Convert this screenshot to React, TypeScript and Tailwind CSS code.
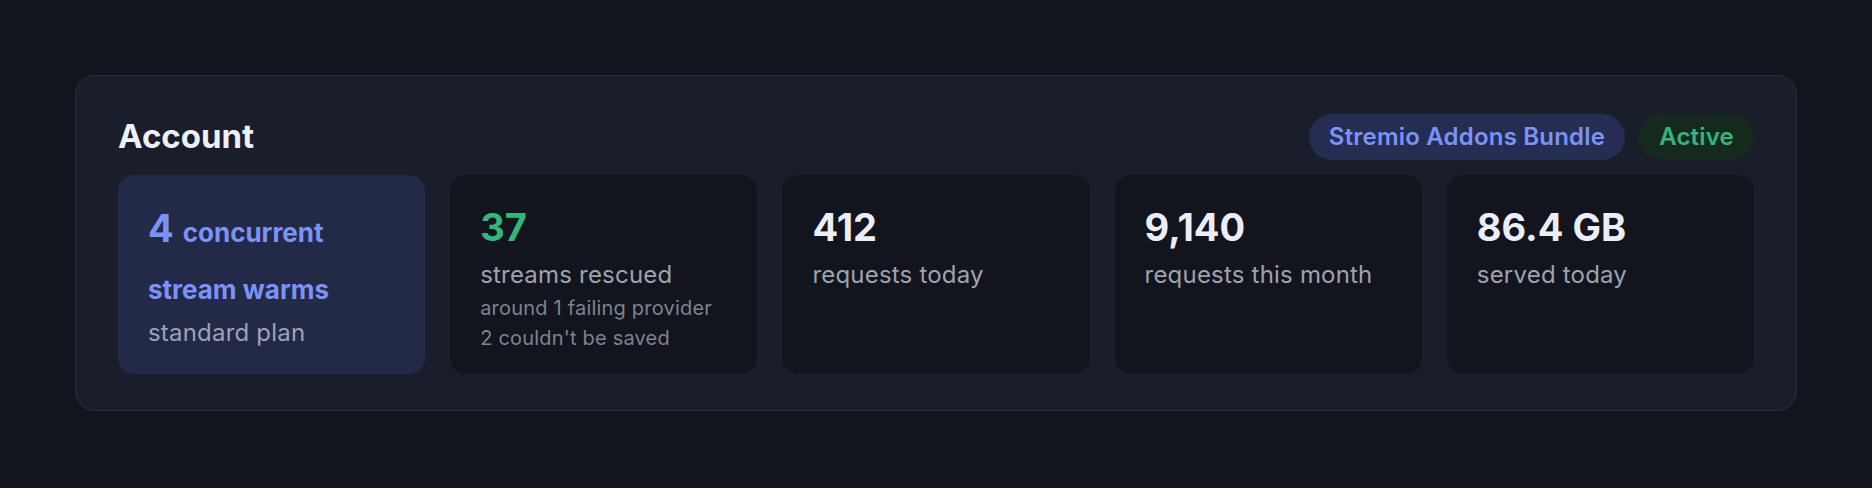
import React from "react";

const font = { fontFamily: "Inter, 'Noto Sans', sans-serif" };

function Stat({
  value,
  label,
  valueClass,
  subs,
}: {
  value: string;
  label: string;
  valueClass: string;
  subs?: string[];
}) {
  return (
    <div className="rounded-[16px] bg-[#12151e] px-[30px] pt-[29px] pb-[20px]">
      <div className={`text-[38px] leading-[46px] font-bold ${valueClass}`}>{value}</div>
      <div className="mt-[9px] text-[24px] leading-[32px] tracking-[0.2px] text-[#9ea2ae]">{label}</div>
      {subs && (
        <div className="mt-[2px]">
          {subs.map((s) => (
            <div key={s} className="text-[20px] leading-[30px] tracking-[0.2px] text-[#7e838f]">
              {s}
            </div>
          ))}
        </div>
      )}
    </div>
  );
}

export default function App() {
  return (
    <div className="w-full h-[488px] bg-[#12151e] px-[75px] pt-[75px]" style={font}>
      <div className="rounded-[20px] border border-[#2b303d] bg-[#1a1e2a] px-[42px] pt-[38px] pb-[36px]">
        <div className="flex items-center justify-between h-[46px]">
          <div className="text-[33px] font-bold text-[#eef0f7]">Account</div>
          <div className="flex items-center gap-[14px]">
            <div className="h-[46px] flex items-center rounded-full bg-[#252e52] px-[20px] text-[24px] tracking-[0.2px] font-semibold text-[#7b93f7]">
              Stremio Addons Bundle
            </div>
            <div className="h-[46px] flex items-center rounded-full bg-[#16291f] px-[20px] text-[24px] tracking-[0.2px] font-semibold text-[#30b779]">
              Active
            </div>
          </div>
        </div>
        <div className="mt-[15px] grid grid-cols-5 gap-[25px] h-[199px]">
          <div className="rounded-[16px] bg-[#232a48] px-[30px] pt-[27px]">
            <div className="text-[38px] leading-[52px] font-bold text-[#7b93f7]">
              <div className="flex items-baseline gap-[9px]">
                <span>4</span>
                <span className="text-[26px]">concurrent</span>
              </div>
              <div>
                <span className="text-[26px]">stream warms</span>
              </div>
            </div>
            <div className="mt-[1px] text-[24px] leading-[32px] tracking-[0.2px] text-[#9ea2b3]">standard plan</div>
          </div>
          <Stat
            value="37"
            label="streams rescued"
            valueClass="text-[#34b67b]"
            subs={["around 1 failing provider", "2 couldn't be saved"]}
          />
          <Stat value="412" label="requests today" valueClass="text-[#eceef5]" />
          <Stat value="9,140" label="requests this month" valueClass="text-[#eceef5]" />
          <Stat value="86.4 GB" label="served today" valueClass="text-[#eceef5]" />
        </div>
      </div>
    </div>
  );
}
